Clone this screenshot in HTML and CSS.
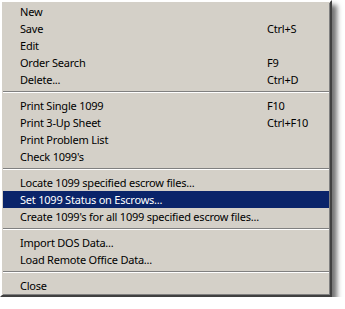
FILE: index.html
```html
<!DOCTYPE html>
<html lang="en">
<head>
  <meta charset="UTF-8">
  <title>1099 Menu</title>
  <link rel="stylesheet" href="styles.css">
</head>
<body>
<div class="menu">
  <div class="item"><span>New</span></div>
  <div class="item"><span>Save</span><span class="key">Ctrl+S</span></div>
  <div class="item"><span>Edit</span></div>
  <div class="item"><span>Order Search</span><span class="key">F9</span></div>
  <div class="item"><span>Delete...</span><span class="key">Ctrl+D</span></div>
  <div class="sep"></div>
  <div class="item"><span>Print Single 1099</span><span class="key">F10</span></div>
  <div class="item"><span>Print 3-Up Sheet</span><span class="key">Ctrl+F10</span></div>
  <div class="item"><span>Print Problem List</span></div>
  <div class="item"><span>Check 1099's</span></div>
  <div class="sep"></div>
  <div class="item"><span>Locate 1099 specified escrow files...</span></div>
  <div class="item active"><span>Set 1099 Status on Escrows...</span></div>
  <div class="item"><span>Create 1099's for all 1099 specified escrow files...</span></div>
  <div class="sep"></div>
  <div class="item"><span>Import DOS Data...</span></div>
  <div class="item"><span>Load Remote Office Data...</span></div>
  <div class="sep"></div>
  <div class="item"><span>Close</span></div>
</div>
</body>
</html>
```

FILE: styles.css
```css
body {
  margin: 0;
  background: #ffffff;
  font-family: "Noto Sans", sans-serif;
  font-size: 11px;
  letter-spacing: -0.22px;
  color: #000;
}
.menu {
  width: 326px;
  padding: 1px;
  background: #d4d0c8;
  border-style: solid;
  border-width: 2px;
  border-color: #ffffff #404040 #404040 #ffffff;
  box-shadow: inset 1px 1px 0 #d4d0c8, inset -1px -1px 0 #808080, 5px 5px 5px rgba(0, 0, 0, 0.55);
}
.item {
  display: grid;
  grid-template-columns: 247px 1fr;
  height: 17px;
  line-height: 17px;
  padding-left: 17px;
  white-space: nowrap;
}
.item.active {
  background: #0a246a;
  color: #ffffff;
}
.sep {
  margin: 3px 0 4px;
  border-top: 1px solid #808080;
  border-bottom: 1px solid #ffffff;
}
```
